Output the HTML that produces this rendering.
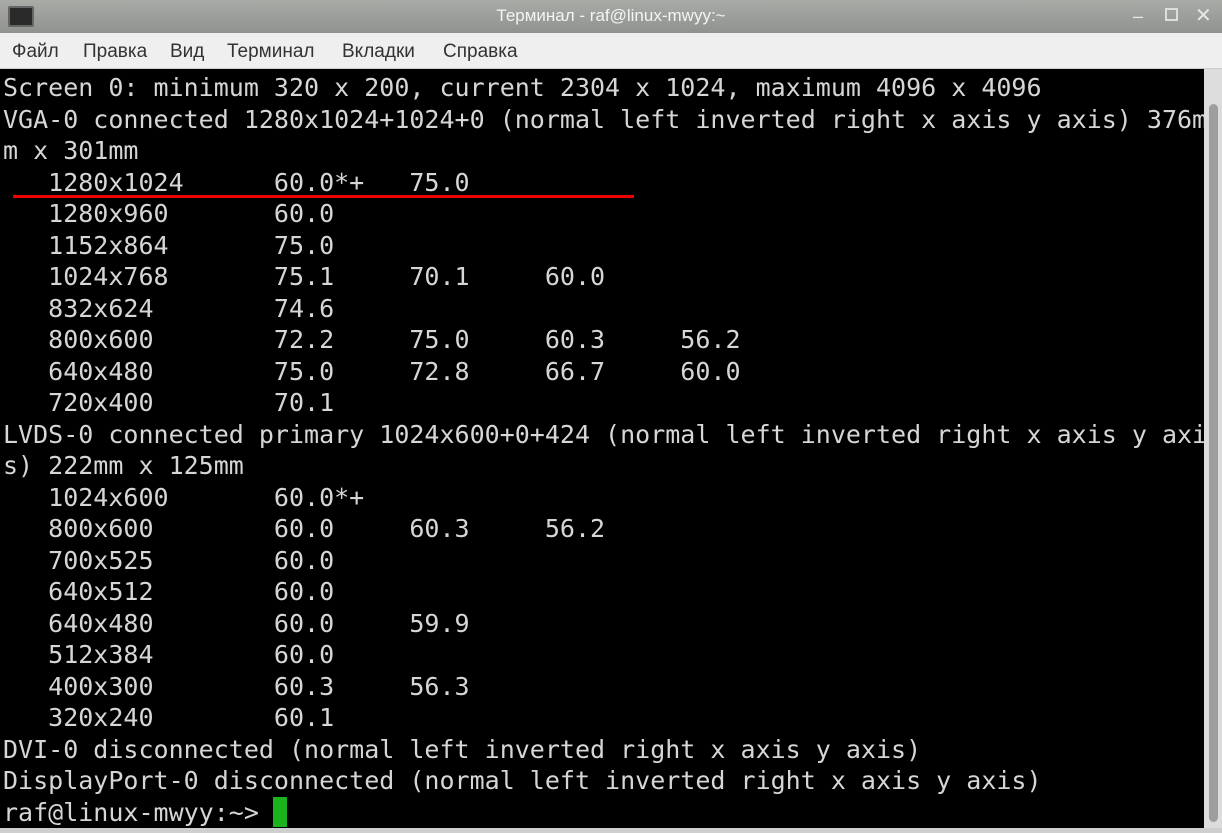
<!DOCTYPE html>
<html><head><meta charset="utf-8"><style>
*{margin:0;padding:0;box-sizing:border-box}
body{width:1222px;height:833px;overflow:hidden;background:#000;position:relative;font-family:"Liberation Sans","DejaVu Sans",sans-serif}
#title{position:absolute;left:0;top:0;width:1222px;height:33px;background:linear-gradient(#a9aba7,#8f928e);color:#f4f4f4;font-size:17px;text-align:center;line-height:32px}
#icon{position:absolute;left:8px;top:6px;width:26px;height:21px;background:#2a2a2a;border:2px solid #666;border-radius:2px}
.wb{position:absolute;top:0;color:#e8e8e8;font-size:18px;line-height:32px}
#menu{position:absolute;left:0;top:33px;width:1222px;height:36px;background:#efefef;border-bottom:1px solid #ccc}
#menu span{position:absolute;top:8px;font-size:19px;color:#333}
#term{position:absolute;left:0;top:69px;width:1204px;height:760px;background:#000}
pre{position:absolute;left:3px;top:72px;font-family:"DejaVu Sans Mono","Liberation Mono",monospace;font-size:25px;line-height:31.52px;color:#d6d6d6;letter-spacing:0}
#sb{position:absolute;left:1204px;top:69px;width:18px;height:760px;background:#dcdcdc}
#thumb{position:absolute;left:1209px;top:104px;width:9px;height:718px;background:#9e9e9e;border-radius:5px}
#red{position:absolute;left:13px;top:195px;width:621px;height:3px;background:#e00}
#cur{position:absolute;left:273px;top:797px;width:14px;height:30px;background:#1cb41c}
#bot{position:absolute;left:0;top:828px;width:1222px;height:5px;background:#cfcfcf}
</style></head><body>
<div id="title">Терминал - raf@linux-mwyy:~</div>
<div id="icon"></div>
<div class="wb" style="left:1133px">–</div>
<div class="wb" style="left:1165px;top:8px;width:13px;height:13px;border:2px solid #ddd"></div>
<div class="wb" style="left:1195px;font-size:20px">✕</div>
<div id="menu"><span style="left:12px">Файл</span><span style="left:83px">Правка</span><span style="left:170px">Вид</span><span style="left:227px">Терминал</span><span style="left:342px">Вкладки</span><span style="left:443px">Справка</span></div>
<div id="term"></div>
<pre>Screen 0: minimum 320 x 200, current 2304 x 1024, maximum 4096 x 4096
VGA-0 connected 1280x1024+1024+0 (normal left inverted right x axis y axis) 376m
m x 301mm
   1280x1024      60.0*+   75.0
   1280x960       60.0
   1152x864       75.0
   1024x768       75.1     70.1     60.0
   832x624        74.6
   800x600        72.2     75.0     60.3     56.2
   640x480        75.0     72.8     66.7     60.0
   720x400        70.1
LVDS-0 connected primary 1024x600+0+424 (normal left inverted right x axis y axi
s) 222mm x 125mm
   1024x600       60.0*+
   800x600        60.0     60.3     56.2
   700x525        60.0
   640x512        60.0
   640x480        60.0     59.9
   512x384        60.0
   400x300        60.3     56.3
   320x240        60.1
DVI-0 disconnected (normal left inverted right x axis y axis)
DisplayPort-0 disconnected (normal left inverted right x axis y axis)
raf@linux-mwyy:~&gt; </pre>
<div id="red"></div>
<div id="cur"></div>
<div id="sb"></div><div id="thumb"></div>
<div id="bot"></div>
</body></html>
